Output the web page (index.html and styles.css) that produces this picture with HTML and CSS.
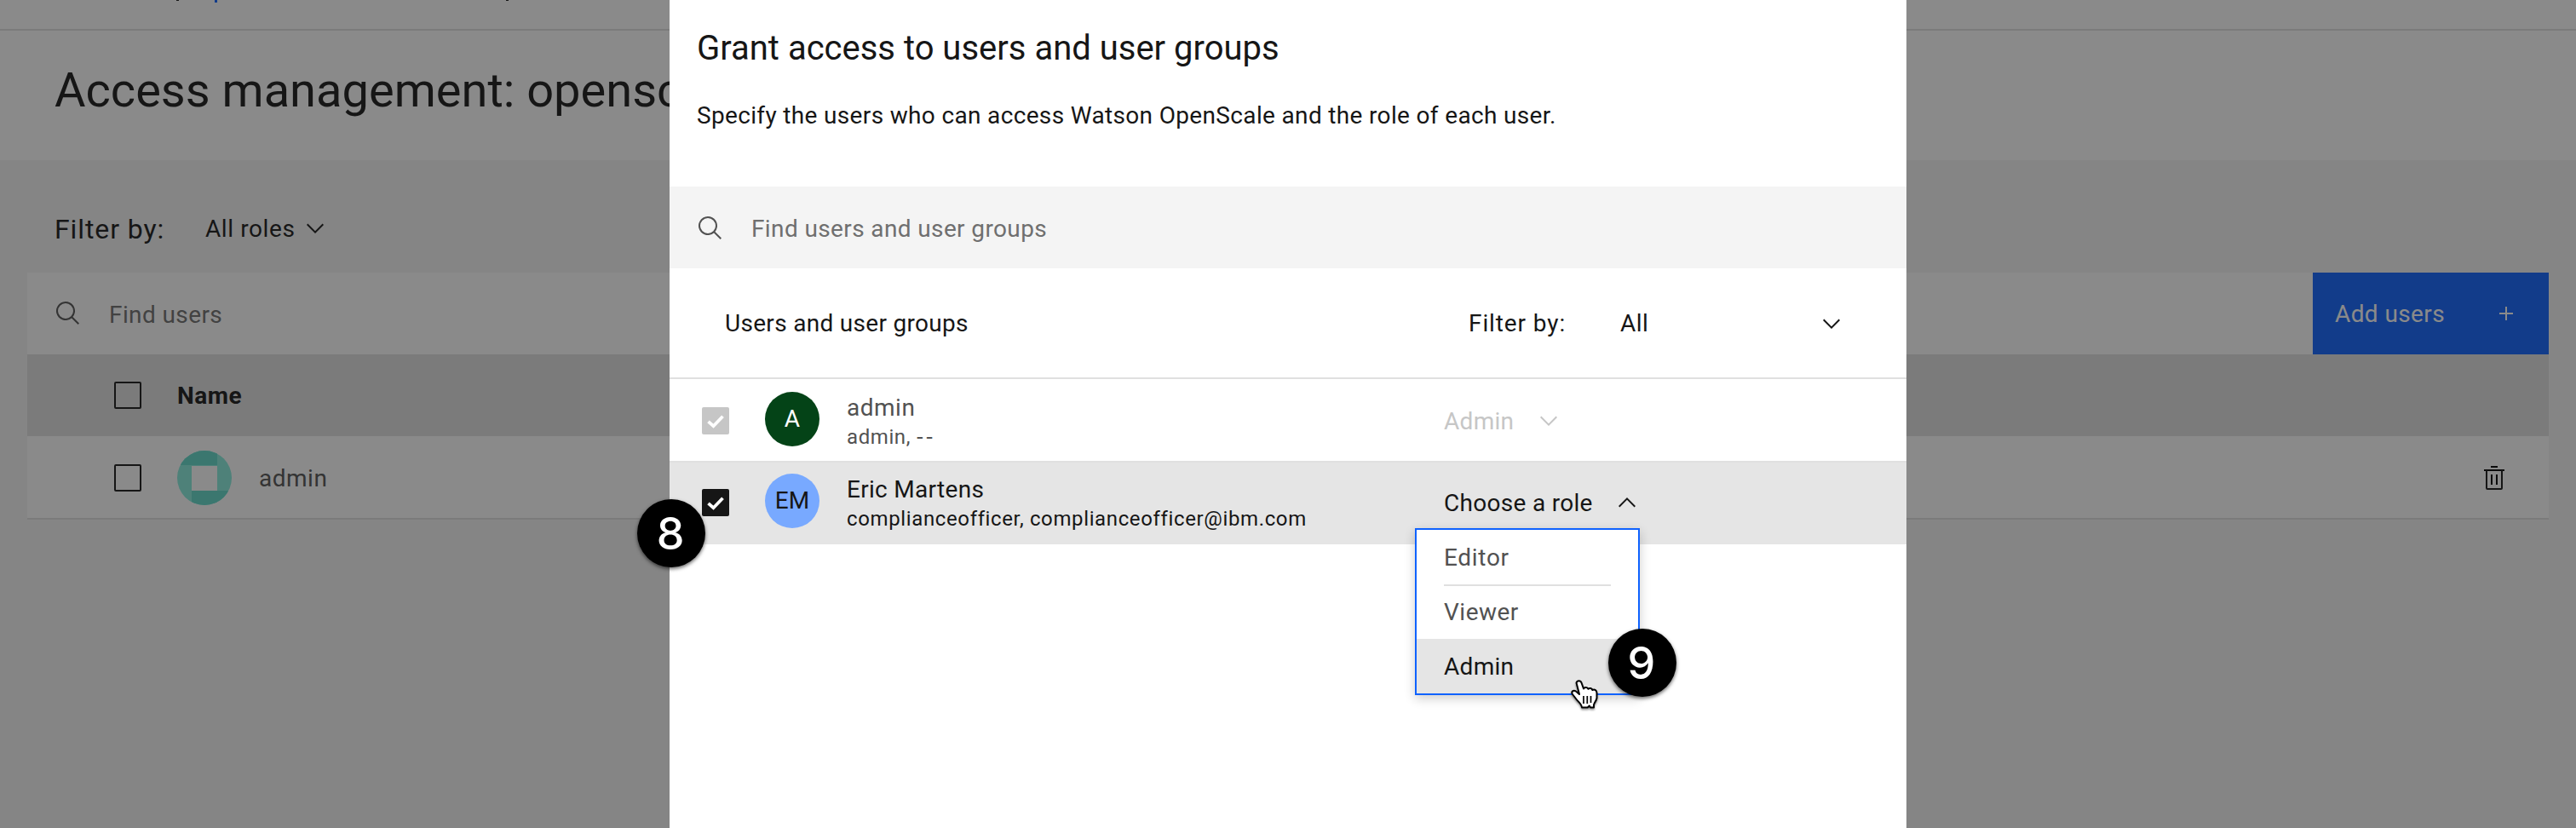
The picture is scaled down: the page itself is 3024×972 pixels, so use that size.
FILE: index.html
```html
<!DOCTYPE html>
<html lang="en">
<head>
<meta charset="utf-8">
<title>Access management</title>
<link rel="stylesheet" href="styles.css">
</head>
<body>
<svg class="defs" aria-hidden="true">
  <symbol id="search" viewBox="0 0 32 32"><path d="M29 27.586l-7.552-7.552a11.018 11.018 0 1 0-1.414 1.414L27.586 29zM4 13a9 9 0 1 1 9 9 9.01 9.01 0 0 1-9-9z"/></symbol>
  <symbol id="chevron" viewBox="0 0 16 16"><path d="M8 11L3 6l.7-.7L8 9.6l4.3-4.3.7.7z"/></symbol>
  <symbol id="check" viewBox="0 0 32 32"><path d="M7.5 16.8l6 5.4L24.5 10.8" fill="none" stroke="#fff" stroke-width="3.8"/></symbol>
</svg>

<div class="page">
  <div class="crumbs"><i></i><i class="link"></i><i class="last"></i></div>
  <header class="page-head"><h1><span class="t t-title">Access management: openscale</span></h1></header>
  <main class="content">
    <div class="filter">
      <span class="t t-flabel">Filter by:</span>
      <span class="t t-roles">All roles</span>
      <svg class="chev"><use href="#chevron"/></svg>
    </div>
    <div class="toolbar">
      <svg class="search-icon"><use href="#search"/></svg>
      <span class="t t-find">Find users</span>
      <button class="add"><span class="t t-add">Add users</span>
        <svg class="plus" viewBox="0 0 16 16"><path d="M7 0h2v7h7v2H9v7H7V9H0V7h7z"/></svg></button>
    </div>
    <div class="thead"><span class="box"></span><span class="t t-name">Name</span></div>
    <div class="trow"><span class="box"></span>
      <svg class="ident" viewBox="0 0 64 64"><defs><clipPath id="c"><circle cx="32" cy="32" r="32"/></clipPath></defs>
        <g clip-path="url(#c)"><rect width="64" height="64" fill="#86ecdc"/><path d="M0 0h47v17H0zM17 47h47v17H17z" fill="#60d9c9"/><rect x="17" y="18" width="30" height="29" fill="#fff"/></g></svg>
      <span class="t t-user">admin</span>
      <svg class="trash" viewBox="0 0 24 28"><path d="M8 0h8v2H8zM0 4h24v2H0zM8 10h2v12H8zM14 10h2v12h-2z"/><path d="M3 5v21q0 1 1 1h16q1 0 1-1V5" fill="none" stroke="#161616" stroke-width="2"/></svg>
    </div>
  </main>
</div>

<div class="overlay">
  <section class="modal">
    <div class="intro">
      <h2><span class="t t-grant">Grant access to users and user groups</span></h2>
      <p><span class="t t-spec">Specify the users who can access Watson OpenScale and the role of each user.</span></p>
    </div>
    <div class="modal-search">
      <svg class="search-icon"><use href="#search"/></svg>
      <span class="t t-mfind">Find users and user groups</span>
    </div>
    <div class="list-head">
      <span class="t t-groups">Users and user groups</span>
      <span class="t t-mfilter">Filter by:</span>
      <span class="t t-all">All</span>
      <svg class="chev"><use href="#chevron"/></svg>
    </div>
    <div class="person">
      <svg class="tick off"><use href="#check"/></svg>
      <span class="avatar green">A</span>
      <div class="who muted"><span class="t t-n1">admin</span><small><span class="t t-s1">admin, <span class="dashes">--</span></span></small></div>
      <div class="role disabled"><span class="t t-r1">Admin</span><svg class="chev"><use href="#chevron"/></svg></div>
    </div>
    <div class="person selected">
      <svg class="tick"><use href="#check"/></svg>
      <span class="avatar blue">EM</span>
      <div class="who"><span class="t t-n2">Eric Martens</span><small><span class="t t-s2">complianceofficer, complianceofficer@ibm.com</span></small></div>
      <div class="role"><span class="t t-r2">Choose a role</span><svg class="chev up"><use href="#chevron"/></svg>
        <div class="menu">
          <div class="item"><span class="t t-ed">Editor</span></div>
          <div class="item ruled"><span class="t t-vi">Viewer</span></div>
          <div class="item active"><span class="t t-ad">Admin</span></div>
        </div>
      </div>
    </div>
  </section>
</div>

<div class="badge eight">8</div>
<div class="badge nine">9</div>
<svg class="cursor" viewBox="0 0 32 34"><path d="M6.500 3.500C7.500 0.500 11.500 0.500 12.500 3.500L15 10.500C16 8.500 19.500 8.500 20.500 10.800C22 9.300 24.800 10 25.300 12C28 10.800 30.500 12.300 30.500 15.500V21.500C30 25 27.500 26.500 27 29.500V32.500H23L21.800 30.500L19.800 32.500H13C12.500 28.500 9 26 7 23.500L2 17C0 14 3 11.500 6 13.500L10 17Z" fill="#fff" stroke="#000" stroke-width="2" stroke-linejoin="round"/><path d="M15 19v9M19.300 19v9M23.500 19v8" stroke="#000" stroke-width="1.700"/></svg>
</body>
</html>
```
FILE: styles.css
```css
* { box-sizing: border-box; }
body { margin: 0; width: 3024px; height: 972px; overflow: hidden; position: relative;
  font: 28px/36px Roboto, "Liberation Sans", sans-serif; color: #161616; background: #f4f4f4; }
h1, h2, p { margin: 0; font-weight: 400; }
svg { display: block; flex: none; }
.t { white-space: nowrap; padding-top: 3px; }
.defs { position: absolute; width: 0; height: 0; }

.crumbs { height: 36px; background: #fff; border-bottom: 2px solid #e0e0e0; display: flex; padding-left: 207px; }
.crumbs i { width: 3px; height: 1px; background: #161616; margin-right: 42px; }
.crumbs .link { height: 3px; background: #0f62fe; margin-right: 339px; }
.page-head { height: 152px; padding: 34px 0 0 64px; background: #fff; }
h1 { font-size: 56px; line-height: 72px; }
.content { padding: 0 32px; }
.filter { height: 132px; display: flex; align-items: center; padding: 26px 0 0 32px; }
.t-flabel { font-size: 32px; width: 177px; letter-spacing: .9px; }
.t-roles { width: 113px; letter-spacing: .6px; }
.chev { width: 32px; height: 32px; fill: currentColor; margin-top: 2px; }
.toolbar { height: 96px; display: flex; align-items: center; background: #fff; padding-left: 32px; color: #6f6f6f; }
.search-icon { width: 32px; height: 32px; fill: #525252; margin-right: 32px; }
.t-find { letter-spacing: .4px; }
.add { margin-left: auto; width: 277px; height: 96px; border: 0; background: #0f62fe; color: #fff; padding: 0 42px 0 26px;
  display: flex; align-items: center; justify-content: space-between; font: inherit; }
.add .t { padding-top: 1px; }
.t-add { letter-spacing: .4px; }
.plus { width: 16px; height: 16px; fill: #fff; }
.thead, .trow { height: 96px; display: flex; align-items: center; padding-left: 102px; }
.thead { background: #e0e0e0; font-weight: 700; }
.thead .t { padding-top: 1px; }
.t-name { letter-spacing: .5px; }
.t-user, .t-n1 { letter-spacing: .5px; }
.trow { height: 98px; background: #fff; border-bottom: 2px solid #e0e0e0; color: #525252; }
.box { width: 32px; height: 32px; border: 2px solid #161616; border-radius: 2px; margin-right: 42px; }
.trow .box { margin-top: 2px; }
.ident { width: 64px; height: 64px; margin: 2px 32px 0 0; }
.trash { width: 24px; height: 28px; margin: 2px 52px 0 auto; }

.overlay { position: absolute; inset: 0; display: flex; background: rgba(22, 22, 22, .5); }
.modal { width: 1452px; height: 972px; margin-left: 786px; background: #fff; }
.intro { height: 219px; padding: 33px 32px 0; }
h2 { font-size: 40px; line-height: 48px; margin-bottom: 37px; }
.t-spec { letter-spacing: .34px; }
.modal-search { height: 96px; background: #f4f4f4; display: flex; align-items: center; padding-left: 32px; color: #6f6f6f; }
.t-mfind { letter-spacing: .38px; }
.modal-search .search-icon { margin-top: 1px; }
.list-head { height: 130px; display: flex; align-items: center; padding: 0 72px 0 65px; border-bottom: 2px solid #e0e0e0; }
.list-head .t { padding-top: 1px; }
.t-groups { width: 873px; letter-spacing: .3px; }
.t-mfilter { width: 178px; letter-spacing: .9px; }
.t-all { letter-spacing: .5px; }
.list-head .chev { margin: 1px 0 0 auto; }
.person { height: 96px; display: flex; align-items: center; padding-left: 38px; }
.selected { height: 98px; padding-bottom: 2px; background: #e5e5e5; box-shadow: inset 0 2px #e0e0e0; }
.tick { width: 32px; height: 32px; border-radius: 2px; background: #161616; margin: 2px 42px 0 0; }
.tick.off { background: #c6c6c6; }
.avatar { width: 64px; height: 64px; border-radius: 50%; line-height: 64px; text-align: center; margin: 0 32px 2px 0; }
.green { background: #044317; color: #fff; }
.blue { background: #78a9ff; }
.who { width: 701px; display: flex; flex-direction: column; padding-top: 3px; }
.who .t { padding-top: 0; }
small { font-size: 24px; line-height: 32px; }
.t-s1 { letter-spacing: .6px; }
.dashes { font-family: "DejaVu Sans", sans-serif; letter-spacing: 2.5px; }
.t-n2 { letter-spacing: .3px; }
.t-s2 { letter-spacing: .63px; }
.muted { color: #525252; }
.role { position: relative; display: flex; align-items: center; }
.t-r1, .t-r2, .t-ad { letter-spacing: .3px; }
.disabled { color: #c6c6c6; }
.role .chev { margin-left: 25px; }
.role .chev.up { transform: scaleY(-1); margin-left: 24px; }
.menu { position: absolute; left: -34px; top: 50.5px; width: 264px; height: 196px; border: 2px solid #0f62fe; background: #fff;
  box-shadow: 0 4px 12px rgba(0, 0, 0, .2); color: #525252; }
.item { height: 64px; line-height: 66px; padding-left: 32px; position: relative; }
.t-ed { letter-spacing: .7px; }
.t-vi { letter-spacing: .5px; }
.ruled::before { content: ""; position: absolute; left: 32px; right: 32px; top: 0; height: 2px; background: #e0e0e0; }
.active { background: #e5e5e5; color: #161616; }

.badge { position: absolute; width: 80px; height: 80px; border-radius: 50%; background: #000; color: #fff; text-align: center;
  font: 500 52px/81px Inter, sans-serif; padding-right: 2px; box-shadow: 0 2px 4px rgba(0, 0, 0, .6); }
.eight { left: 748px; top: 586px; }
.nine { left: 1888px; top: 738px; }
.cursor { position: absolute; left: 1844px; top: 798px; width: 32px; height: 34px; filter: drop-shadow(0 2px 1px rgba(0, 0, 0, .4)); }
```
